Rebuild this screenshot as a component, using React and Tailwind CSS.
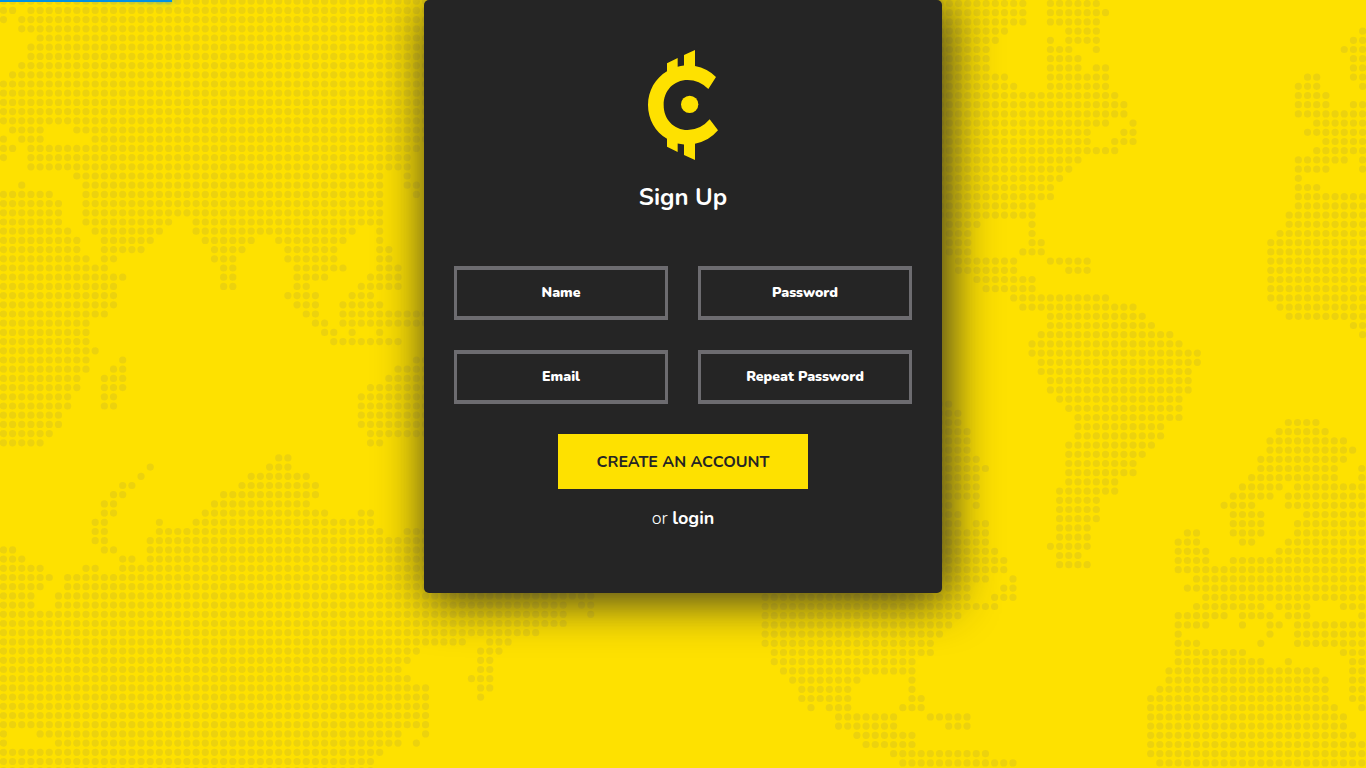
const A = `0-46
0-1 3-46
0 2-46
2-46
4-46
3-46
3-46
2-46
1-46
0-46
0-46
0-46
0-46
0-46
1-4 8-46
0 2-4 10-46
0-1 3-45
0 3-44
3-44
8-41 44
2 9-41 44-45
0-5 9-41 45
0-6 9-41
0-6 9-41
0-6 9-18 21-41
0-7 10-17 21-38 41
0-8 11-16 22-27 30-37 41
0-8 11-15 23-26 31-36 41-42
0-9 11-12 23-25 31-36 41-42
0-11 24-25 32-37 41-43
0-13 24-25 32-35 40-43
0-12 24-25 32-33 39-43
0-12 31-34 38-40
0-12 32-34 37-41
0-11 33-34 37-46
0-9 34-35 37-46
0-9 35-36 38 41
0-9 36-43
0-10
0-9 13 45-46
0-9 12-13 43-46
0-8 11-13 42-46
0-8 11-13 40-46
0-7 11-12 39-46
0-7 11-12 39-46
0-6 39-46
0-6 39-46
0-5 40-46
0-4 40-41`;

const B = `30-31
16 29-31
15 27-33
13-14 26-34
12-13 24-34
11-12 23-33
11-12 22-35 39-40
10-11 17 21-40
10-11 17-41 44-46
10-11 16-46
0-1 11-12 16-46
0-2 13-14 16-46
0-4 9-10 13-46
0-5 7-46
0-4 7-46
0-3 6-64
0-3 6-61 63-64
0-61 64
0-61
0-58
0-50 53-55
0-45 52-54
0-44 52-53
0-43 52-53
0-44 51-53
0-46 52-53
0-46 52
0-46
0-46
0-46
0 4-43 46
0 6-43 45
0-41
0-40
0-40`;

/* Columns of C and D are stored 20 to the right so that all stay positive. */
const C = `19-28 31-36
19-28 31-37
19-28 31-36
19-26 33-36 65
19-25 31 33-36 64-65
19-24 31-33 36 63-65
19-24 31-34 64-65
19-24 31-34 36-37 64-65
19-26 31-37 59-60 64-65
19-27 31-37 58-60 65
19-38 58-61
19-39 58-61 64-65
19-39 58-65
19-37 40 60-65
19-35 39-40 59-65
19-35 38-40 61-65
19-38 60-65
19-34 58-63 65
19-33 58-61 65
19-32 58
19-31 58-60
19-31 58-65
19-29 58-65
19-29 57-65
20-23 29 57-65
20-22 29 56-65
20-22 29-30 55-65
20-22 28-30 55-65
21-27 31-35 55-65
21-27 33-35 55-65
23-29 55-65
24-29 55-65
27-37 55-65
28-40 56-65
31-41 57-65
31-42 64-65
30-44 65
29-45
29-47
30-47
30-46
31-46
31-46
32-45
33-45
34-45
34-43
34-43
33-42
33-41
33-40
33-40
33-38
32-38
32-36
32-36
32-36
32-35
32-35
31-35
32-34
32-35`;

const D = `19-20
19-21
19-21 57-60
19-22 56-61
19-22 55-63
19-22 55-64
19-23 54-63
19-24 54-62 65
19-23 53-62 65
19-23 52-56 58-65
19-23 51-55 57-65
19-20 23 50-53 57-65
19-21 51-54 59-65
19-21 23-24 51-54 58-65
19-24 46-47 51-54 58-65
19-24 45-47 52-53 57-65
19-25 45-48 56-65
19-26 45-48 51-65
19-26 45-65
19-24 27 47-65
19-22 26-27 46-65
0-22 25-27 48-65
0-25 47-54 56-59 63-65
0-21 45-50 52-55 57-59 65
0-20 45-48 52 55-56 58-65
0-19 45 55 58-65
0-18 45-47 54 58-65
1-18 45-52 63-65
1-16 45-54 57 64-65
2-16 44-60 64-65
3-10 16 44-61 64-65
4-9 16 43-61 64-65
4-9 16-17 42-61 64-65
5 7-9 15-17 42-62 65
8-14 18-22 42-63
8-14 20-22 42-63
10-16 42-64
11-16 42-65
14-24 42-65
15-27 43-65`;

function dotPath(rows, x0, y0, dx, dy) {
  const r = 3.6;
  return rows
    .split("\n")
    .map((row, j) =>
      row
        .split(" ")
        .map((run) => {
          const [from, to = from] = run.split("-").map(Number);
          let d = "";
          for (let k = from; k <= to; k++) {
            const x = (x0 + k * dx - r).toFixed(2);
            const y = (y0 + j * dy).toFixed(2);
            d += `M${x} ${y}a${r} ${r} 0 1 0 ${2 * r} 0a${r} ${r} 0 1 0 ${-2 * r} 0`;
          }
          return d;
        })
        .join("")
    )
    .join("");
}

const MAP =
  dotPath(A, 3.4, 1.2, 9.177, 9.2) +
  dotPath(B, 3.4, 457.9, 9.177, 9.2) +
  dotPath(C, 949.4 - 20 * 9.183, 3.5, 9.183, 9.2) +
  dotPath(D, 948.7 - 20 * 9.18, 404.1, 9.18, 9.2);

function WorldMap() {
  return (
    <svg className="absolute inset-0 h-[768px] w-[1366px]" viewBox="0 0 1366 768" aria-hidden="true">
      <path d={MAP} fill="#6d6c70" fillOpacity="0.125" />
    </svg>
  );
}

function Logo() {
  return (
    <svg className="h-[110px] w-[70px]" viewBox="84 30 210 330" fill="#fee100" aria-hidden="true">
      <path d="M141 70L173 54V80.500Q182 77.500 192 76.500V45L225 30V78Q262 85 288 111L265 147Q238 120 203 120C161 120 131 152 131 195S161 270 203 270Q242 270 269 238L294 271Q266 304 225 311V360L192 345V313.500Q182 312.500 173 310.500V336L141 320V296.500C106 276 84 238 84 195S106 114 141 93.500Z" />
      <circle cx="209" cy="193" r="26" />
    </svg>
  );
}

function Field({ label, type = "text" }) {
  return (
    <input
      type={type}
      placeholder={label}
      className="h-[54px] w-full min-w-0 border-x-3 border-y-4 border-[#6d6c70] bg-transparent pb-[2px] text-center text-[14px] font-black text-white outline-none placeholder:text-white placeholder:opacity-100"
    />
  );
}

function ProgressBar() {
  return (
    <div className="absolute left-0 top-0 z-10 h-[2px] w-[172px] bg-[#0092e4]">
      <div className="absolute right-0 h-full w-[100px] -translate-y-1 rotate-3 shadow-[0_0_10px_#0092e4,0_0_5px_#0092e4]" />
    </div>
  );
}

export default function App() {
  return (
    <div className="relative h-screen overflow-hidden bg-[#fee100] font-[Nunito,Lato,sans-serif] text-white">
      <WorldMap />
      <ProgressBar />
      <main className="relative mx-auto flex h-[593px] w-[518px] flex-col items-center rounded-[5px] bg-[#252525] px-[30px] pt-[50px] shadow-[5px_5px_50px_#252525]">
        <Logo />
        <h1 className="mt-[20px] text-[24px] leading-[34px] font-bold">Sign Up</h1>
        <form className="mt-[52px] flex w-full flex-col items-center">
          <div className="grid w-full grid-cols-2 gap-[30px]">
            <Field label="Name" />
            <Field label="Password" type="password" />
            <Field label="Email" type="email" />
            <Field label="Repeat Password" type="password" />
          </div>
          <button type="button" className="mt-[30px] h-[55px] w-[250px] bg-[#fee100] text-[16px] font-bold text-[#252525]">
            CREATE AN ACCOUNT
          </button>
        </form>
        <p className="mt-[16px] text-[18px] leading-[26px] font-light">
          or <a className="font-bold">login</a>
        </p>
      </main>
    </div>
  );
}
